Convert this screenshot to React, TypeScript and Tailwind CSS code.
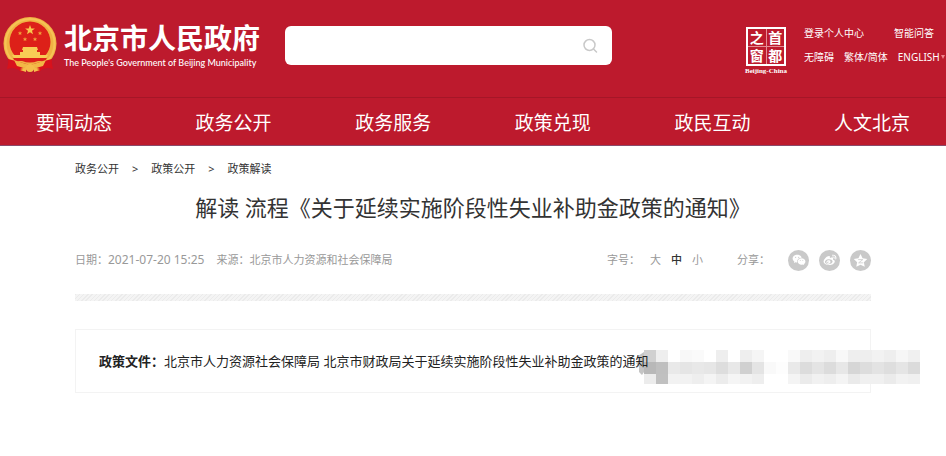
import React from "react";
import { RiWechatFill, RiWeiboFill } from "react-icons/ri";

const navItems = ["要闻动态", "政务公开", "政务服务", "政策兑现", "政民互动", "人文北京"];
const crumbs = ["政务公开", "政策公开", "政策解读"];

const mosaicRows: string[][] = [
  "d0 ee ff f8 fa ff ee ff ee f5 ff ff f9 ee f2 ee f8 ee ee f2 ee f6 f0".split(" "),
  "b8 bf e9 e5 e8 e6 dd e8 d0 e4 f9 fd e9 dc e4 dc e7 d6 dd e3 de e5 db".split(" "),
  "ec c0 f2 f2 ee f4 ec f5 f2 ee ff ff f4 eb f1 ee f4 ea f0 f0 eb f2 f0".split(" "),
];

function Emblem() {
  return (
    <svg viewBox="0 0 54 56" className="h-14 w-[54px] shrink-0" role="img" aria-label="国徽">
      <path d="M7 38 L4 52 L12 50 L18 55 L27 52 L36 55 L42 50 L50 52 L47 38Z" fill="#d8121c" />
      <circle cx="27" cy="26.500" r="26.500" fill="#f0b243" />
      <circle cx="27" cy="26.500" r="24.500" fill="none" stroke="#f6c456" strokeWidth="2" />
      <circle cx="27" cy="25" r="20.500" fill="#dd2019" />
      <path d="M27 8l1.300 3.400 3.600.1-2.900 2.200 1 3.500-3-2-3 2 1-3.500-2.900-2.200 3.600-.1z" fill="#f8c84d" />
      <g fill="#f0a13d">
        <path d="M17 14l.6 1.400 1.600.1-1.200 1 .4 1.500-1.400-.8-1.400.8.4-1.500-1.200-1 1.600-.1z" />
        <path d="M37 14l.6 1.400 1.600.1-1.200 1 .4 1.500-1.400-.8-1.400.8.4-1.500-1.200-1 1.600-.1z" />
        <path d="M22 20l.6 1.400 1.600.1-1.200 1 .4 1.500-1.400-.8-1.400.8.4-1.500-1.200-1 1.600-.1z" />
        <path d="M32 20l.6 1.400 1.600.1-1.200 1 .4 1.500-1.400-.8-1.400.8.4-1.500-1.200-1 1.600-.1z" />
      </g>
      <path d="M20 30h14l1 3h-1v2h3v3h8l-2 3H11l-2-3h8v-3h3v-2h-1z" fill="#f8cc55" />
      <path d="M10 41h34l-2 3H12z" fill="#dd2019" />
      <path d="M5 42l8 2 14 4 14-4 8-2-1 8-8 2-13-3-13 3-8-2z" fill="#d8121c" />
      <path d="M11 43l9 3 7 2 7-2 9-3-3 6-7 2-6-2-6 2-7-2z" fill="#f2b745" />
      <circle cx="27" cy="51" r="4" fill="#f5bd4b" />
      <path d="M17 53l6-2v4zM37 53l-6-2v4z" fill="#f5bd4b" />
    </svg>
  );
}

function Seal() {
  return (
    <a href="#" className="flex w-12 shrink-0 flex-col items-center pt-[27px]">
      <span className="grid h-[39px] w-10 grid-cols-2 grid-rows-2 gap-px border-2 border-white bg-[#e58c94] text-center font-['Noto_Sans_CJK_SC',sans-serif] text-[14px] leading-[17px] font-bold">
        {["之", "首", "窗", "都"].map((c) => (
          <span key={c} className="bg-[#bd1a2d]">{c}</span>
        ))}
      </span>
      <span className="font-['Liberation_Serif',serif] text-[7px] leading-[10px] font-bold whitespace-nowrap">Beijing-China</span>
    </a>
  );
}

function Header() {
  return (
    <header className="border-b border-[#8a4a6a] bg-[#bd1a2d] text-white">
      <div className="flex h-[98px] border-b border-[#a51627]">
        <a href="#" className="flex shrink-0 gap-[7px] pt-[17px] pl-[3px]">
          <Emblem />
          <span className="flex w-[200px] flex-col pt-[3px]">
            <span className="text-[28px] leading-9 font-bold whitespace-nowrap">北京市人民政府</span>
            <span className="font-['Lato',sans-serif] text-[9px] leading-[14px] font-medium whitespace-nowrap">The People's Government of Beijing Municipality</span>
          </span>
        </a>
        <form className="mt-[26px] ml-[21px] flex h-[39px] flex-1 items-center rounded-md bg-white pr-[14px] pl-3" role="search" onSubmit={(e) => e.preventDefault()}>
          <input type="search" aria-label="搜索" className="min-w-0 flex-1 bg-transparent text-sm text-gray-700 outline-none" />
          <button type="submit" aria-label="搜索">
            <svg viewBox="0 0 16 16" className="h-4 w-4" fill="none" stroke="#c9c9c9" strokeWidth="1.500" strokeLinecap="round">
              <circle cx="7.500" cy="7" r="5.500" />
              <path d="M11.500 11l3 3" />
            </svg>
          </button>
        </form>
        <div className="ml-[130px] flex shrink-0 gap-[14px]">
          <Seal />
          <div className="flex w-[142px] flex-col gap-[10px] pt-[26px] text-[10px] leading-[14px] whitespace-nowrap">
            <div className="flex justify-between pr-3">
              <a href="#">登录个人中心</a>
              <a href="#">智能问答</a>
            </div>
            <div className="flex gap-[10px]">
              <a href="#">无障碍</a>
              <a href="#">繁体/简体</a>
              <button type="button" className="flex items-center gap-px">
                ENGLISH
                <svg viewBox="0 0 4 4" className="h-1 w-1"><path d="M0 0h4L2 4z" fill="#f0808a" /></svg>
              </button>
            </div>
          </div>
        </div>
      </div>
      <nav className="flex h-[47px] items-center justify-between px-9 pt-0.5 text-[19px] leading-7">
        {navItems.map((n) => (
          <a key={n} href="#">{n}</a>
        ))}
      </nav>
    </header>
  );
}

function ShareIcon({ label, children }: { label: string; children: React.ReactNode }) {
  return (
    <button type="button" aria-label={label} className="flex h-[21px] w-[21px] items-center justify-center rounded-full bg-[#c9c9c9] text-white">
      {children}
    </button>
  );
}

function Mosaic() {
  return (
    <div className="absolute top-5 left-[559px] flex" aria-hidden="true">
      <svg viewBox="0 0 9 34" className="h-[34px] w-[9px]">
        <path d="M9 2L3 6l1 4-3 3 3 4v5l3 3 2-3z" fill="#c4c4c4" />
      </svg>
      <div>
        {mosaicRows.map((row, r) => (
          <div key={r} className="flex">
            {row.map((v, i) => (
              <span key={i} className={r === 2 ? "h-[10px] w-3" : "h-3 w-3"} style={{ backgroundColor: `#${v}${v}${v}` }} />
            ))}
          </div>
        ))}
      </div>
    </div>
  );
}

export default function App() {
  return (
    <div className="min-h-screen overflow-x-hidden bg-white font-['Noto_Sans','Noto_Sans_CJK_SC',sans-serif] text-[#333]">
      <Header />
      <main className="px-[75px]">
        <nav aria-label="面包屑" className="flex gap-[13px] pt-[14px] text-[11px] leading-[18px]">
          {crumbs.map((c, i) => (
            <React.Fragment key={c}>
              {i > 0 && <span>&gt;</span>}
              <a href="#">{c}</a>
            </React.Fragment>
          ))}
        </nav>
        <h1 className="mt-[13px] text-center text-[22px] leading-8">解读 流程《关于延续实施阶段性失业补助金政策的通知》</h1>
        <div className="mt-[25px] flex h-6 items-center justify-between text-[11px] text-[#999]">
          <div className="flex items-center gap-3">
            <span>日期：<time className="text-xs">2021-07-20 15:25</time></span>
            <span>来源：北京市人力资源和社会保障局</span>
          </div>
          <div className="flex items-center">
            <span className="mr-[10px]">字号：</span>
            <div className="mr-[34px] flex gap-[10px]">
              <button type="button">大</button>
              <button type="button" className="font-medium text-[#333]">中</button>
              <button type="button">小</button>
            </div>
            <span className="mr-[18px]">分享：</span>
            <div className="flex gap-[10px]">
              <ShareIcon label="微信"><RiWechatFill size={14} /></ShareIcon>
              <ShareIcon label="微博"><RiWeiboFill size={14} /></ShareIcon>
              <ShareIcon label="QQ空间">
                <svg viewBox="0 0 16 16" className="h-[15px] w-[15px]">
                  <path d="M8 1l2.200 4.600 5 .7-3.600 3.500.9 5L8 12.400l-4.500 2.400.9-5L.8 6.300l5-.7z" fill="currentColor" />
                  <path d="M5.500 7h5l-4.500 3.500h5" fill="none" stroke="#c9c9c9" strokeWidth="0.800" />
                </svg>
              </ShareIcon>
            </div>
          </div>
        </div>
        <div className="mt-[22px] h-[7px] bg-[repeating-linear-gradient(135deg,#ebebeb_0px,#ebebeb_1px,#f4f4f4_1px,#f4f4f4_3px)]" />
        <div className="relative mt-7 border border-[#f3f3f3] px-[23px] py-5 text-[13px] leading-[22px] whitespace-nowrap text-[#222]">
          <Mosaic />
          <p className="relative">
            <strong>政策文件：</strong>
            <a href="#">北京市人力资源社会保障局 北京市财政局关于延续实施阶段性失业补助金政策的通知</a>
          </p>
        </div>
      </main>
    </div>
  );
}
